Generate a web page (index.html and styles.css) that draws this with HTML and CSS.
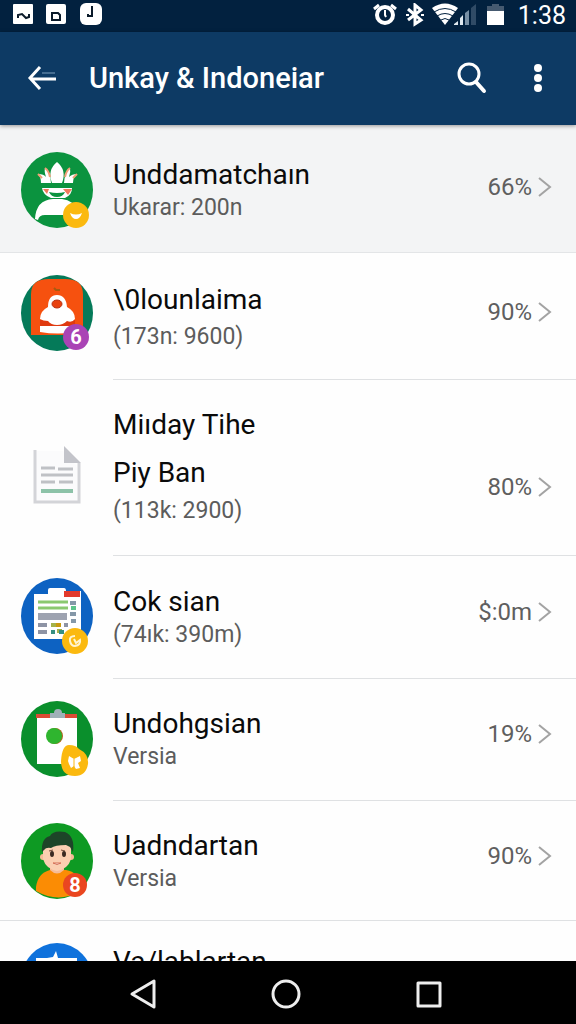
FILE: index.html
```
<!DOCTYPE html>
<html lang="en">
  <head>
    <meta charset="utf-8">
    <meta name="viewport" content="width=device-width, initial-scale=1">
    <title>Unkay &amp; Indoneiar</title>
    <link rel="stylesheet" href="styles.css">
  </head>
  <body>
    <div class="screen">
      <div class="status">
        <svg width="92" height="24" viewBox="0 0 92 24">
          <rect x="1" y="1" width="20" height="20" rx="1" fill="#fff"/>
          <path d="M6 15v-3l4-1 4 4 3-1v-3" fill="none" stroke="#0a1a2a" stroke-width="2"/>
          <rect x="34" y="1" width="20" height="20" rx="2" fill="#fff"/>
          <path d="M40 10h6l2 2v5h-8v-8" fill="none" stroke="#0a1a2a" stroke-width="2"/>
          <rect x="68" y="0" width="22" height="22" rx="6" fill="#fff"/>
          <path d="M80 3v10h-4v-2" fill="none" stroke="#0a1a2a" stroke-width="2"/>
        </svg>
        <div class="status-right">
          <svg width="134" height="24" viewBox="0 0 134 24">
            <!-- alarm -->
            <g fill="none" stroke="#fff">
              <circle cx="12" cy="12" r="8" stroke-width="4"/>
              <path d="M1 6l5-4M23 6l-5-4" stroke-width="3"/>
              <path d="M12 7v5l1 2" stroke-width="2"/>
              <!-- bluetooth -->
              <path d="M35 6l13 11-6 4V2l6 5-13 10" stroke-width="3"/>
              <path d="M33 12h3M48 12h3" stroke-width="2"/>
            </g>
            <!-- wifi -->
            <path d="M59 5q13-9 26 0L72 22z" fill="#fff"/>
            <path d="M61 9q11-7 22 0M64 13q8-5 16 0M68 17q4-3 8 0" fill="none" stroke="#02213f" stroke-width="1"/>
            <!-- signal -->
            <path d="M81 22v-1l4-3v4zM87 22v-7l3-3v10z" fill="#dfe8ef"/>
            <path d="M92 22V10l4-3v15z" fill="#7890a5"/>
            <path d="M98 22V5l5-4v21z" fill="#304b66"/>
            <!-- battery -->
            <path d="M114 8V3h5V1h7v2h5v5z" fill="#465a70"/>
            <path d="M114 8h17v14h-17z" fill="#fff"/>
          </svg>
          <span class="clock">1:38</span>
        </div>
      </div>

      <header class="appbar">
        <button class="icon-btn" aria-label="Back">
          <svg width="30" height="28" viewBox="0 0 30 28" fill="none" stroke="#fff">
            <path d="M13 3L3 14l10 11M3 15h26" stroke-width="3"/>
            <path d="M15 9h13" stroke="#7fa0be" stroke-width="1"/>
          </svg>
        </button>
        <h1>Unkay &amp; Indoneiar</h1>
        <button class="icon-btn search" aria-label="Search">
          <svg width="30" height="32" viewBox="0 0 30 32" fill="none" stroke="#fff" stroke-width="3">
            <circle cx="12" cy="12" r="10"/>
            <path d="M19 20l8 9" stroke-width="4" stroke-linecap="round"/>
          </svg>
        </button>
        <button class="icon-btn" aria-label="More">
          <svg width="10" height="28" viewBox="0 0 10 28" fill="#fff">
            <circle cx="5" cy="4" r="4"/>
            <circle cx="5" cy="14" r="4"/>
            <circle cx="5" cy="24" r="4"/>
          </svg>
        </button>
      </header>

      <main class="list">
        <a href="#" class="row row-active">
          <svg class="avatar" viewBox="0 0 73 76">
            <ellipse cx="36" cy="38" rx="36" ry="38" fill="#0b933f"/>
            <path d="M14 67Q15 48 32 47h9q12 1 14 12l-9 4H24q-6 0-7 5z" fill="#fff"/>
            <path d="M20 31q0-6-3-9 6 0 8 3-2-6-1-9 5 3 6 15zM31 31q-5-13 5-21 10 8 5 21zM43 31q1-12 6-15 1 4-1 9 3-3 8-3-4 3-4 9z" fill="#fff"/>
            <path d="M24 16q4 3 5 9M49 16q-4 3-5 9M17 22l4 4M56 22l-4 4" fill="none" stroke="#f0a078" stroke-width="2"/>
            <path d="M21 36h30q0 7-7 10H30q-8-3-9-10z" fill="#fff"/>
            <path d="M22 37h6l-2 5zM51 37h-9l5 6z" fill="#f27a5c"/>
            <path d="M28 40q8 2 16 0-2 5-8 5t-8-5z" fill="#0b933f"/>
            <circle cx="55" cy="63" r="13" fill="#fbb90f"/>
            <path d="M49 61q6 3 12 0-2 6-6 6t-6-6z" fill="#fff"/>
          </svg>
          <div class="body">
            <div class="text">
              <div class="title">Unddamatchaın</div>
              <div class="sub">Ukarar: 200n</div>
            </div>
            <span class="value">66%</span>
            <svg class="chevron" viewBox="0 0 14 22"><path d="M1 2l11 9-11 9"/></svg>
          </div>
        </a>

        <a href="#" class="row row-spaced">
          <svg class="avatar" viewBox="0 0 73 76">
            <ellipse cx="36" cy="38" rx="36" ry="38" fill="#057a59"/>
            <path d="M10 60V19Q10 4 28 4h16q18 0 18 15v41z" fill="#f6510f"/>
            <path d="M33 13l2 2h4" stroke="#a85a10" stroke-width="2" fill="none"/>
            <path d="M19 45h35v7H19z" fill="#e03a10"/>
            <path d="M19 51h36v6q-18 3-36 0z" fill="#fff"/>
            <path d="M19 44q0-8 8-12 0-12 9-12t10 12q8 4 8 12-3 4-8 2-4 4-10 4t-9-4q-5 0-8-2z" fill="#fff"/>
            <ellipse cx="36" cy="29" rx="5" ry="4" fill="#e8420f" stroke="#b83010"/>
            <circle cx="55" cy="62" r="13" fill="#a944b5"/>
            <text class="badge" x="55" y="69">6</text>
          </svg>
          <div class="body">
            <div class="text">
              <div class="title">\0lounlaima</div>
              <div class="sub">(173n: 9600)</div>
            </div>
            <span class="value">90%</span>
            <svg class="chevron" viewBox="0 0 14 22"><path d="M1 2l11 9-11 9"/></svg>
          </div>
        </a>

        <a href="#" class="row row-tall">
          <svg class="avatar" viewBox="0 0 73 76">
            <path d="M14 13h28l14 16v35H14z" fill="#fbfbfc"/>
            <path d="M14 12v52h44V25" fill="none" stroke="#d3d4d8" stroke-width="3"/>
            <path d="M43 8l17 17H43z" fill="#c3c4ca"/>
            <path d="M20 30h14M37 31h15M20 37h32M20 44h14M38 44h14" stroke="#bfc1c5" stroke-width="3"/>
            <path d="M20 53h32" stroke="#8cc2a8" stroke-width="4"/>
          </svg>
          <div class="body">
            <div class="text">
              <div class="title">Miıday Tihe</div>
              <div class="title">Piy Ban</div>
              <div class="sub">(113k: 2900)</div>
            </div>
            <span class="value">80%</span>
            <svg class="chevron" viewBox="0 0 14 22"><path d="M1 2l11 9-11 9"/></svg>
          </div>
        </a>

        <a href="#" class="row row-card">
          <svg class="avatar" viewBox="0 0 73 76">
            <ellipse cx="36" cy="38" rx="36" ry="38" fill="#0d62c2"/>
            <path d="M13 16h14v-4q0-2 2-2h14q2 0 2 3h15v48H13z" fill="#fff"/>
            <path d="M43 13h16v6H43z" fill="#e23a2d"/>
            <path d="M17 24h30M17 30h30" stroke="#8bc96f" stroke-width="3"/>
            <path d="M17 35h29v7H17z" fill="#9ea3b0"/>
            <path d="M49 25h6M49 36h6M50 43h5" stroke="#8598a8" stroke-width="4"/>
            <path d="M50 30h5" stroke="#5cc48a" stroke-width="4"/>
            <path d="M17 47h9M17 54h9M43 47h4" stroke="#8e94a5" stroke-width="4"/>
            <path d="M30 47h5M36 53h5" stroke="#a5b24a" stroke-width="4"/>
            <path d="M35 47h5" stroke="#c99a10" stroke-width="4"/>
            <path d="M30 54h4M38 54h5" stroke="#358f83" stroke-width="4"/>
            <circle cx="54" cy="63" r="13" fill="#fbb90f"/>
            <path d="M54 58q-6 0-5 5t5 5q6-1 5-6l-4 3-2-4" fill="none" stroke="#fff4d0" stroke-width="2"/>
          </svg>
          <div class="body">
            <div class="text">
              <div class="title">Cok sian</div>
              <div class="sub">(74ık: 390m)</div>
            </div>
            <span class="value">$:0m</span>
            <svg class="chevron" viewBox="0 0 14 22"><path d="M1 2l11 9-11 9"/></svg>
          </div>
        </a>

        <a href="#" class="row">
          <svg class="avatar" viewBox="0 0 73 76">
            <ellipse cx="36" cy="38" rx="36" ry="38" fill="#0a8f2c"/>
            <path d="M16 14h40v49H16z" fill="#fff"/>
            <path d="M15 13h41v4H15z" fill="#db4b35"/>
            <path d="M29 12h4q0-4 4-4t4 4h3v5H29z" fill="#9fb0b8"/>
            <circle cx="34" cy="35" r="8" fill="#b5601c"/>
            <circle cx="33" cy="35" r="8" fill="#2fb52f"/>
            <path d="M40 60q1-16 8-16 7 0 10 4 10 5 9 15-2 12-13 12-14 0-14-15z" fill="#fbb90f"/>
            <path d="M48 55l5 3 6-3 1 5-3 2 2 5-4 1-2-3-3 2-2-4-1-3z" fill="#fff"/>
            <path d="M53 58v8" stroke="#fbb90f"/>
          </svg>
          <div class="body">
            <div class="text">
              <div class="title">Undohgsian</div>
              <div class="sub">Versia</div>
            </div>
            <span class="value">19%</span>
            <svg class="chevron" viewBox="0 0 14 22"><path d="M1 2l11 9-11 9"/></svg>
          </div>
        </a>

        <a href="#" class="row row-full">
          <svg class="avatar" viewBox="0 0 73 76">
            <ellipse cx="36" cy="38" rx="36" ry="38" fill="#0e9a23"/>
            <path d="M15 68V64q2-14 14-17h16q13 2 14 17v4q-21 13-44 0z" fill="#fb8c04"/>
            <path d="M29 40h14v7q-7 7-14 0z" fill="#f5bb97"/>
            <circle cx="22" cy="34" r="3" fill="#f5bb97"/>
            <circle cx="50" cy="34" r="3" fill="#f5bb97"/>
            <path d="M22 22q14-7 28 0v14q-3 10-14 12-11-2-14-12z" fill="#fbcfb1"/>
            <path d="M21 29q-1-14 8-16 3-6 15-4 10 4 8 20l-3-5-4-2q-11 0-15 3-5-1-7 2z" fill="#1d4528"/>
            <path d="M28 28l4-1M40 27l4 1" stroke="#734c3b" stroke-width="1"/>
            <ellipse cx="31" cy="31" rx="2" ry="3" fill="#3b2a22"/>
            <ellipse cx="43" cy="31" rx="2" ry="3" fill="#3b2a22"/>
            <path d="M32 40q4 3 8 0z" fill="#fff" stroke="#d56f55"/>
            <circle cx="54" cy="62" r="12" fill="#ea4620"/>
            <text class="badge" x="54" y="69">8</text>
          </svg>
          <div class="body">
            <div class="text">
              <div class="title">Uadndartan</div>
              <div class="sub">Versia</div>
            </div>
            <span class="value">90%</span>
            <svg class="chevron" viewBox="0 0 14 22"><path d="M1 2l11 9-11 9"/></svg>
          </div>
        </a>

        <a href="#" class="row row-last">
          <svg class="avatar" viewBox="0 0 73 76">
            <ellipse cx="36" cy="38" rx="36" ry="38" fill="#0f72dc"/>
            <path d="M15 15h11l6-1 3-6 2 7h19v3H40l-3 8H25l-1-8h-9z" fill="#fff"/>
          </svg>
          <div class="body">
            <div class="text">
              <div class="title">Va/lablartan</div>
            </div>
          </div>
        </a>
      </main>

      <nav class="navbar">
        <button class="nav-btn" aria-label="Back">
          <svg width="28" height="32" viewBox="0 0 28 32"><path d="M25 3v26L3 16z"/></svg>
        </button>
        <button class="nav-btn" aria-label="Home">
          <svg width="32" height="32" viewBox="0 0 32 32"><circle cx="16" cy="16" r="13"/></svg>
        </button>
        <button class="nav-btn" aria-label="Recent apps">
          <svg width="28" height="28" viewBox="0 0 28 28"><rect x="3" y="3" width="22" height="23"/></svg>
        </button>
      </nav>
    </div>
  </body>
</html>
```
FILE: styles.css
```
* {
  box-sizing: border-box;
}
body {
  margin: 0;
  font-family: Roboto, "Liberation Sans", sans-serif;
  background: #fefefe;
}
button {
  border: none;
  padding: 0;
  background: none;
  cursor: pointer;
}
svg {
  display: block;
  flex: none;
}
.screen {
  height: 100vh;
  display: flex;
  flex-direction: column;
  overflow: hidden;
}

/* top bars */
.status {
  flex: none;
  height: 32px;
  padding: 3px 10px 0 12px;
  display: flex;
  justify-content: space-between;
  background: #02213f;
  color: #fff;
}
.status-right {
  display: flex;
  gap: 11px;
}
.clock {
  font-size: 25px;
  line-height: 26px;
}
.appbar {
  flex: none;
  height: 93px;
  padding: 0 33px 2px 27px;
  display: flex;
  align-items: center;
  background: #0d3a64;
  color: #fff;
  box-shadow: 0 1px 4px rgba(0, 0, 0, 0.4);
  z-index: 1;
}
.appbar h1 {
  flex: 1;
  margin: 0 0 0 32px;
  font-size: 29px;
  font-weight: 500;
  line-height: 40px;
  white-space: nowrap;
}
.search {
  margin-right: 46px;
}

/* list */
.list {
  flex: 1;
  min-height: 0;
  overflow: hidden;
}
.row {
  display: flex;
  align-items: flex-start;
  gap: 19px;
  padding-left: 21px;
  color: #0a0a0a;
  text-decoration: none;
}
.avatar {
  width: 73px;
  height: 76px;
  margin-top: 22px;
}
.body {
  flex: 1;
  display: flex;
  align-items: flex-start;
  padding: 23px 24px 32px 0;
  border-bottom: 1px solid #dfe1e3;
}
.text {
  flex: 1;
}
.title {
  font-size: 28px;
  line-height: 44px;
}
.sub {
  font-size: 23px;
  line-height: 22px;
  color: #5c5c5c;
}
.value {
  font-size: 24px;
  line-height: 64px;
  color: #5f5f5f;
}
.chevron {
  width: 14px;
  height: 22px;
  margin: 21px 0 0 6px;
  fill: none;
  stroke: #a3a3a3;
  stroke-width: 2;
}
.badge {
  fill: #fff;
  font-size: 20px;
  font-weight: 700;
  text-anchor: middle;
}

.row-active {
  background: #f3f4f5;
  border-bottom: 1px solid #e3e5e7;
}
.row-active .avatar {
  margin-top: 27px;
}
.row-active .body {
  padding: 28px 24px 31px 0;
  border: none;
}
.row-active .value,
.row-spaced .value {
  line-height: 68px;
}
.row-active .chevron,
.row-spaced .chevron {
  margin-top: 23px;
}
.row-spaced .body {
  padding: 25px 24px 27px 0;
}
.row-spaced .sub {
  line-height: 30px;
}
.row-tall .avatar {
  margin-top: 58px;
}
.row-tall .body {
  padding: 21px 24px 30px 0;
}
.row-tall .title {
  line-height: 48px;
}
.row-tall .sub {
  line-height: 28px;
}
.row-tall .value {
  margin-top: 54px;
}
.row-tall .chevron {
  margin-top: 75px;
}
.row-card .body {
  padding: 24px 24px 32px 0;
}
.row-full {
  border-bottom: 1px solid #dfe1e3;
}
.row-full .body {
  padding-bottom: 30px;
  border: none;
}
.row-last .body {
  padding-top: 19px;
  border: none;
}

/* system navigation */
.navbar {
  flex: none;
  height: 63px;
  padding: 3px 133px 0 129px;
  display: flex;
  align-items: center;
  justify-content: space-between;
  background: #000;
}
.nav-btn svg {
  fill: none;
  stroke: #eee;
  stroke-width: 3;
  stroke-linejoin: round;
}
```
